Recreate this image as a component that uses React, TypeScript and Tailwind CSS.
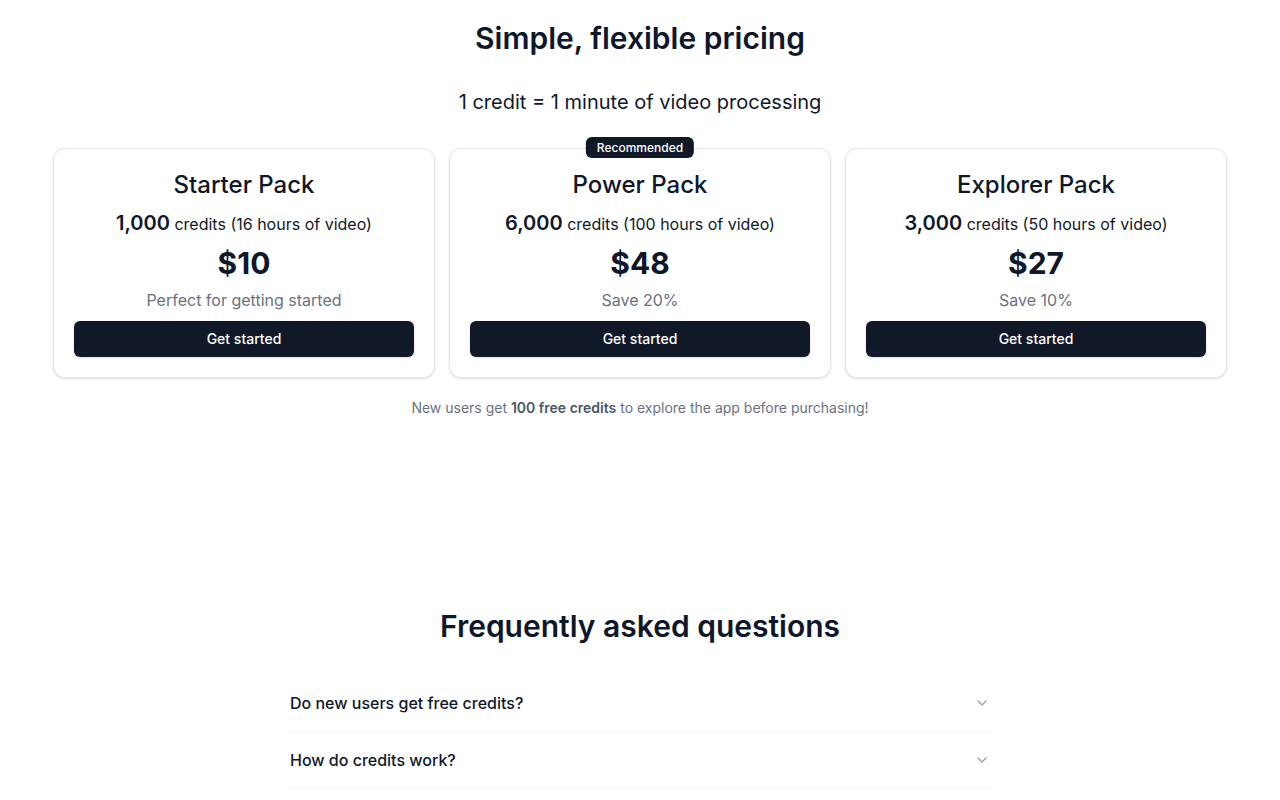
import { ChevronDown } from 'lucide-react'

const packs = [
  { name: 'Starter Pack', credits: '1,000', hours: '16', price: '$10', note: 'Perfect for getting started' },
  { name: 'Power Pack', credits: '6,000', hours: '100', price: '$48', note: 'Save 20%', recommended: true },
  { name: 'Explorer Pack', credits: '3,000', hours: '50', price: '$27', note: 'Save 10%' },
]

const faqs = ['Do new users get free credits?', 'How do credits work?']

export default function App() {
  return (
    <div
      className="min-h-screen bg-white text-[#0f172a]"
      style={{ fontFamily: 'Inter, "Noto Sans", sans-serif' }}
    >
      <section className="px-[53px] pt-5">
        <h1 className="text-center text-3xl font-semibold">Simple, flexible pricing</h1>
        <p className="mt-8 text-center text-xl">1 credit = 1 minute of video processing</p>

        <div className="mt-8 grid grid-cols-3 gap-[14px]">
          {packs.map((p) => (
            <div
              key={p.name}
              className="relative flex flex-col items-center gap-[7px] rounded-xl border border-gray-200 bg-white px-5 pt-5 pb-5 shadow-sm"
            >
              {p.recommended && (
                <span className="absolute -top-[12px] left-1/2 flex h-[21px] -translate-x-1/2 items-center rounded-md bg-[#111827] px-[11px] text-xs font-medium text-white">
                  Recommended
                </span>
              )}
              <h2 className="text-2xl font-medium">{p.name}</h2>
              <p className="mt-[1px] text-base leading-7">
                <span className="text-xl font-semibold">{p.credits}</span> credits ({p.hours} hours of video)
              </p>
              <p className="text-3xl font-bold">{p.price}</p>
              <p className="text-base text-gray-500">{p.note}</p>
              <button className="mt-[2px] h-9 w-full rounded-md bg-[#111827] text-sm font-medium text-white shadow">
                Get started
              </button>
            </div>
          ))}
        </div>

        <p className="mt-5 text-center text-sm text-gray-500">
          New users get <span className="font-semibold text-gray-600">100 free credits</span> to explore the app before purchasing!
        </p>
      </section>

      <section className="mt-[190px] pb-10">
        <h2 className="text-center text-3xl font-semibold">Frequently asked questions</h2>
        <div className="mx-auto mt-[31px] w-[700px]">
          {faqs.map((q) => (
            <div key={q} className="flex items-center justify-between border-b border-gray-100 py-4">
              <span className="text-base font-medium">{q}</span>
              <ChevronDown className="h-4 w-4 text-gray-400" />
            </div>
          ))}
        </div>
      </section>
    </div>
  )
}
